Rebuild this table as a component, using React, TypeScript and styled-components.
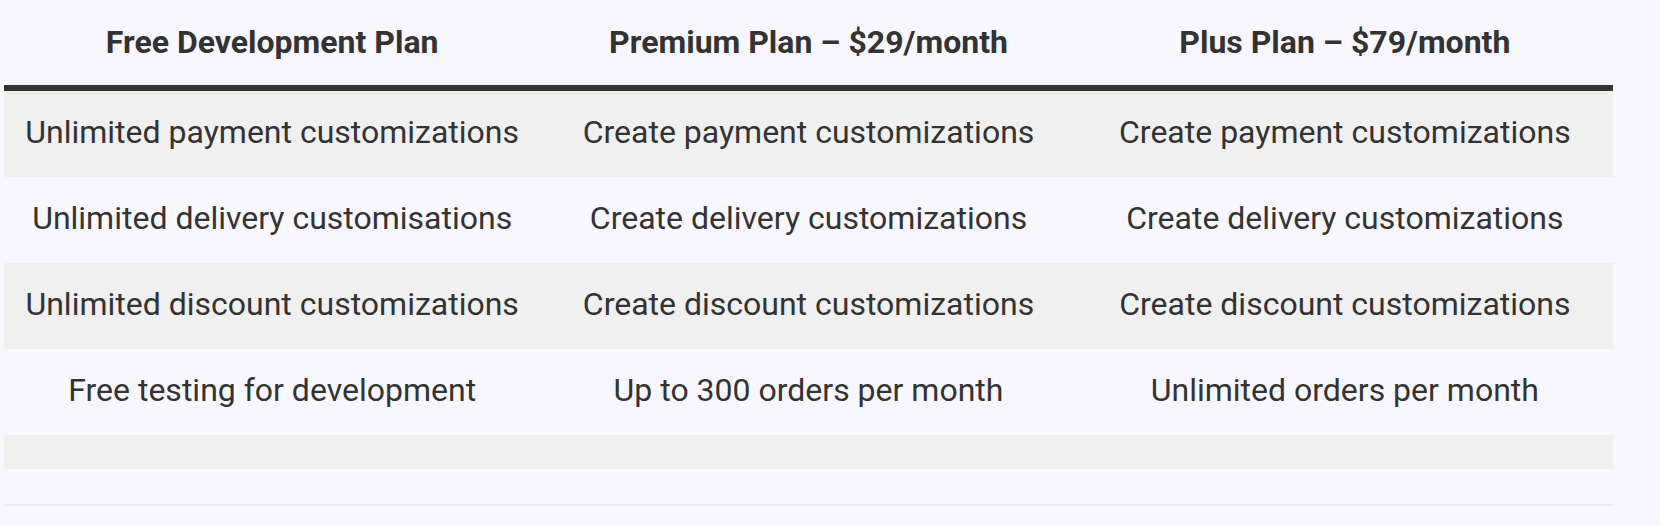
import React from "react";
import styled, { createGlobalStyle } from "styled-components";

const GlobalStyle = createGlobalStyle`
  html, body {
    margin: 0;
    padding: 0;
    background: #f9f7fe;
  }
  body {
    font-family: Roboto, "Liberation Sans", sans-serif;
    color: #333;
  }
`;

const StyledPage = styled.div`
  padding: 0 4px;
`;

const StyledTable = styled.table`
  width: 1609px;
  table-layout: fixed;
  border-collapse: separate;
  border-spacing: 0;
  font-size: 32px;
`;

const StyledTh = styled.th`
  font-weight: 700;
  text-align: center;
  line-height: 52px;
  padding: 16px 10px 17px;
  border-bottom: 6px solid #333;
`;

const StyledRow = styled.tr<{ $shaded?: boolean }>`
  background: ${(p) => (p.$shaded ? "#f0f0f0" : "transparent")};
`;

const StyledTd = styled.td<{ $last?: boolean }>`
  text-align: center;
  line-height: 52px;
  padding: ${(p) => (p.$last ? "17px 10px 18px" : "15px 10px 19px")};
  border-bottom: ${(p) => (p.$last ? "2px solid #eeedf1" : "none")};
`;

type Plan = {
  title: string;
  features: string[];
};

const plans: Plan[] = [
  {
    title: "Free Development Plan",
    features: [
      "Unlimited payment customizations",
      "Unlimited delivery customisations",
      "Unlimited discount customizations",
      "Free testing for development",
    ],
  },
  {
    title: "Premium Plan – $29/month",
    features: [
      "Create payment customizations",
      "Create delivery customizations",
      "Create discount customizations",
      "Up to 300 orders per month",
    ],
  },
  {
    title: "Plus Plan – $79/month",
    features: [
      "Create payment customizations",
      "Create delivery customizations",
      "Create discount customizations",
      "Unlimited orders per month",
    ],
  },
];

const rowCount = 6;

const App = () => {
  const rows = Array.from({ length: rowCount }, (_, i) =>
    plans.map((plan) => plan.features[i] ?? "")
  );

  return (
    <StyledPage>
      <GlobalStyle />
      <StyledTable>
        <thead>
          <tr>
            {plans.map((plan) => (
              <StyledTh key={plan.title}>{plan.title}</StyledTh>
            ))}
          </tr>
        </thead>
        <tbody>
          {rows.map((cells, i) => (
            <StyledRow key={i} $shaded={i % 2 === 0}>
              {cells.map((cell, j) => (
                <StyledTd key={j} $last={i === rowCount - 1}>
                  {cell}
                </StyledTd>
              ))}
            </StyledRow>
          ))}
        </tbody>
      </StyledTable>
    </StyledPage>
  );
};

export default App;
